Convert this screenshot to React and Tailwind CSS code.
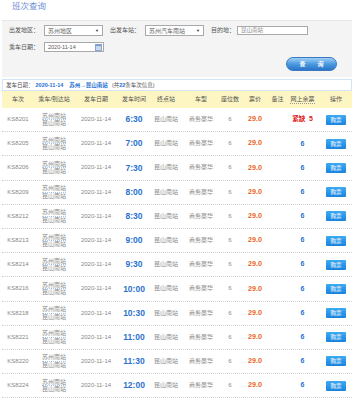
import React from "react";

const rows = [
  { no: "KS8201", time: "6:30", short: true },
  { no: "KS8205", time: "7:00" },
  { no: "KS8206", time: "7:30" },
  { no: "KS8209", time: "8:00" },
  { no: "KS8212", time: "8:30" },
  { no: "KS8213", time: "9:00" },
  { no: "KS8214", time: "9:30" },
  { no: "KS8216", time: "10:00" },
  { no: "KS8218", time: "10:30" },
  { no: "KS8221", time: "11:00" },
  { no: "KS8220", time: "11:30" },
  { no: "KS8224", time: "12:00" },
];

const heads = ["车次", "乘车/到达站", "发车日期", "发车时间", "终点站", "车型", "座位数", "票价", "备注", "网上余票", "操作"];
const widths = [
  "w-[32px]",
  "w-[40px]",
  "w-[44px]",
  "w-[32px]",
  "w-[32px]",
  "w-[38px]",
  "w-[20px]",
  "w-[30px]",
  "w-[15px]",
  "w-[35px]",
  "w-[32px]",
];

function Select({ value, w }) {
  return (
    <div className={`${w} h-[11px] bg-white border border-[#a9a9a9] flex items-center justify-between pl-[3px] pr-[3px]`}>
      <span className="text-[6px] leading-[8px] text-[#666]">{value}</span>
      <span className="text-[4px] leading-[6px] text-[#333]">▼</span>
    </div>
  );
}

function Cell({ i, children, className = "" }) {
  return (
    <div className={`${widths[i]} shrink-0 flex items-center justify-center ${className}`}>
      {children}
    </div>
  );
}

export default function App() {
  return (
    <div className="w-[357px] h-[400px] overflow-hidden bg-white font-['Liberation_Sans','Noto_Sans_CJK_SC',sans-serif] text-[#666]">
      {/* title */}
      <div className="h-[20px] pt-[2px] pl-[12px]">
        <span className="text-[8.5px] leading-[9px] text-[#7090d8] block">班次查询</span>
      </div>

      {/* search panel */}
      <div className="ml-[2px] w-[350px] h-[57px] bg-[#f4f4f4] border-t border-[#e8e8e8] pt-[4px] pl-[7px]">
        <div className="flex items-center h-[11px] text-[6px] text-[#555]">
          <span className="w-[35px]">出发地区：</span>
          <Select value="苏州地区" w="w-[59px]" />
          <span className="ml-[7px] w-[35px]">出发车站：</span>
          <Select value="苏州汽车南站" w="w-[59px]" />
          <span className="ml-[7px] w-[26px]">目的地：</span>
          <div className="w-[71px] h-[9px] bg-white border border-[#a9a9a9] pl-[3px] flex items-center">
            <span className="text-[5.5px] leading-[7px] text-[#888]">昆山南站</span>
          </div>
        </div>
        <div className="flex items-center h-[10px] mt-[6px] text-[6px] text-[#555]">
          <span className="w-[35px]">乘车日期：</span>
          <div className="w-[60px] h-[10px] bg-white border border-[#a9a9a9] pl-[3px] pr-[1px] flex items-center justify-between">
            <span className="text-[5.5px] leading-[7px] text-[#555]">2020-11-14</span>
            <svg width="7" height="7" viewBox="0 0 7 7">
              <rect x="0.5" y="0.5" width="6" height="6" fill="#c9d9ee" stroke="#8aa6cc" />
              <rect x="0.5" y="0.5" width="6" height="1.6" fill="#7d9ccc" />
            </svg>
          </div>
        </div>
        <div className="flex justify-end pr-[15px] mt-[5px]">
          <button className="w-[51px] h-[14px] rounded-full bg-gradient-to-b from-[#9fd0f5] via-[#4c9ae0] to-[#2a74c8] border border-[#3a78c0] flex items-center justify-center gap-[12px] text-white text-[6px] font-bold leading-[8px]">
            <span>查</span>
            <span>询</span>
          </button>
        </div>
      </div>

      {/* info bar */}
      <div className="ml-[2px] w-[350px] mt-[2px] h-[12px] border border-[#d3e5f4] flex items-center pl-[3px] text-[5.5px] leading-[8px] text-[#555]">
        <span>发车日期：</span>
        <span className="ml-[2px] font-bold text-[#1f6fd0]">2020-11-14</span>
        <span className="ml-[6px] font-bold text-[#1f6fd0]">苏州→昆山南站</span>
        <span className="ml-[4px]">
          (共<span className="font-bold text-[#1f6fd0]">22</span>条车次信息)
        </span>
      </div>

      {/* table */}
      <div className="ml-[2px] w-[350px]">
        <div className="flex h-[17px] bg-[#fdf6c3] text-[6px] text-[#555]">
          {heads.map((h, i) => (
            <Cell key={h} i={i}>
              <span className={i === 9 ? "border-b border-dotted border-[#999] leading-[7px]" : ""}>{h}</span>
            </Cell>
          ))}
        </div>
        {rows.map((r) => (
          <div key={r.no} className="flex h-[24.2px] border-b border-dotted border-[#d0d0d0] text-[6px] text-[#888]">
            <Cell i={0}>{r.no}</Cell>
            <Cell i={1} className="flex-col">
              <span className="leading-[6.5px] border-b border-dotted border-[#a9c5ec]">苏州南站</span>
              <span className="leading-[6.5px]">昆山南站</span>
            </Cell>
            <Cell i={2}>2020-11-14</Cell>
            <Cell i={3}>
              <span className="text-[8.5px] font-bold text-[#2a72d0]">{r.time}</span>
            </Cell>
            <Cell i={4}>昆山南站</Cell>
            <Cell i={5}>商务豪华</Cell>
            <Cell i={6}>6</Cell>
            <Cell i={7}>
              <span className="text-[7.2px] font-bold text-[#e8661e]">29.0</span>
            </Cell>
            <Cell i={8}></Cell>
            <Cell i={9}>
              {r.short ? (
                <span className="text-[6.5px] font-bold text-[#e02222]">
                  紧缺 <span className="ml-[2px] text-[7px]">5</span>
                </span>
              ) : (
                <span className="text-[7px] font-bold text-[#2a72d0]">6</span>
              )}
            </Cell>
            <Cell i={10}>
              <span className="w-[20px] h-[10px] rounded-[1px] bg-gradient-to-b from-[#3eaaf3] to-[#1883de] text-white text-[5.5px] leading-[10px] text-center">
                购票
              </span>
            </Cell>
          </div>
        ))}
      </div>
    </div>
  );
}
